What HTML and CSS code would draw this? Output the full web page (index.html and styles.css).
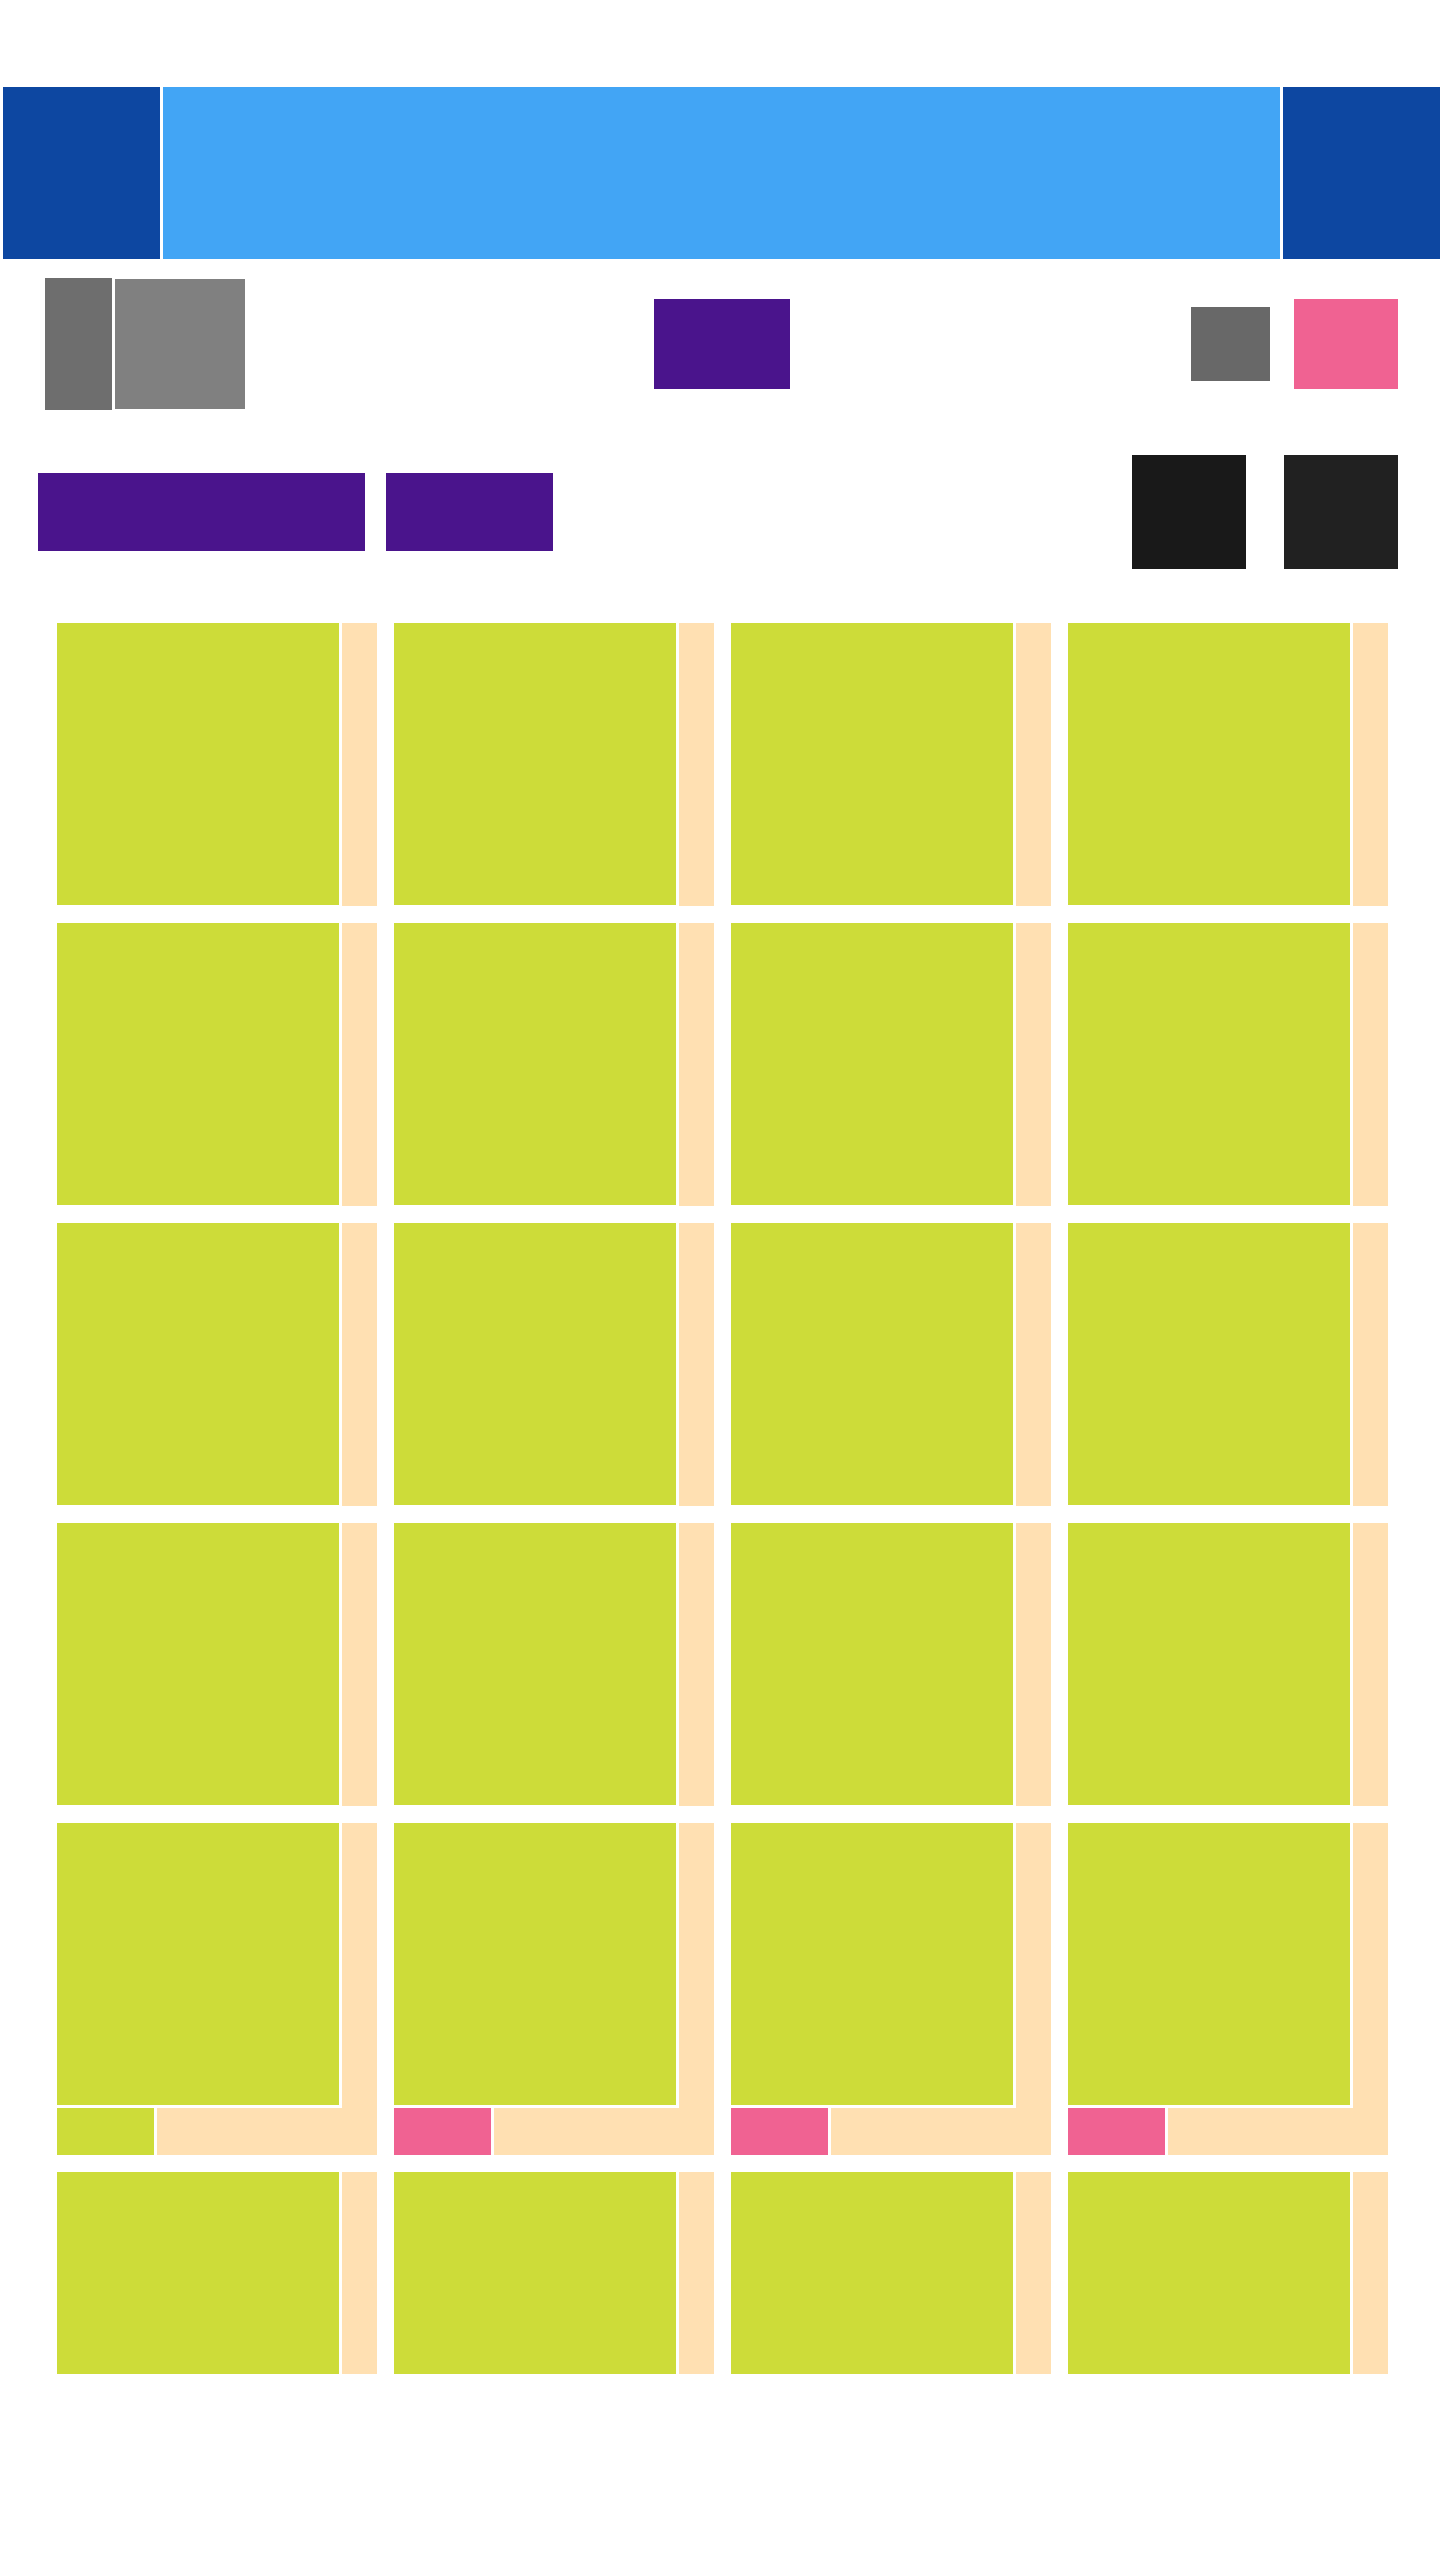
FILE: index.html
```html
<!DOCTYPE html>
<html lang="en">
<head>
<meta charset="utf-8">
<title>Gallery</title>
<link rel="stylesheet" href="styles.css">
</head>
<body>
<div class="page">
  <header class="header">
    <div class="header-side"></div>
    <div class="header-main"></div>
    <div class="header-side"></div>
  </header>

  <section class="toolbar">
    <div class="toolbar-left">
      <div class="logo-mark"></div>
      <div class="logo-box"></div>
    </div>
    <div class="toolbar-center">
      <div class="tab-active"></div>
    </div>
    <div class="toolbar-right">
      <div class="tool-gray"></div>
      <div class="tool-pink"></div>
    </div>
  </section>

  <section class="actions">
    <div class="actions-left">
      <div class="pill pill-wide"></div>
      <div class="pill pill-narrow"></div>
    </div>
    <div class="actions-right">
      <div class="square square-a"></div>
      <div class="square square-b"></div>
    </div>
  </section>

  <div class="grid-wrap">
    <div class="grid">
      <div class="card"><div class="thumb"></div></div>
      <div class="card"><div class="thumb"></div></div>
      <div class="card"><div class="thumb"></div></div>
      <div class="card"><div class="thumb"></div></div>

      <div class="card"><div class="thumb"></div></div>
      <div class="card"><div class="thumb"></div></div>
      <div class="card"><div class="thumb"></div></div>
      <div class="card"><div class="thumb"></div></div>

      <div class="card"><div class="thumb"></div></div>
      <div class="card"><div class="thumb"></div></div>
      <div class="card"><div class="thumb"></div></div>
      <div class="card"><div class="thumb"></div></div>

      <div class="card"><div class="thumb"></div></div>
      <div class="card"><div class="thumb"></div></div>
      <div class="card"><div class="thumb"></div></div>
      <div class="card"><div class="thumb"></div></div>

      <div class="card card-bar"><div class="thumb"></div><div class="bar"><div class="bar-tag tag-green"></div></div></div>
      <div class="card card-bar"><div class="thumb"></div><div class="bar"><div class="bar-tag tag-pink"></div></div></div>
      <div class="card card-bar"><div class="thumb"></div><div class="bar"><div class="bar-tag tag-pink"></div></div></div>
      <div class="card card-bar"><div class="thumb"></div><div class="bar"><div class="bar-tag tag-pink"></div></div></div>

      <div class="card"><div class="thumb"></div></div>
      <div class="card"><div class="thumb"></div></div>
      <div class="card"><div class="thumb"></div></div>
      <div class="card"><div class="thumb"></div></div>
    </div>
  </div>
</div>
</body>
</html>
```

FILE: styles.css
```css
* {
  box-sizing: content-box;
}

html, body {
  margin: 0;
  padding: 0;
  background: #ffffff;
  font-family: "Liberation Sans", Arial, sans-serif;
}

.page {
  padding: 87px 0 0 3px;
}

/* Header */
.header {
  display: flex;
  gap: 3px;
  height: 172px;
}

.header-side {
  width: 157px;
  flex: none;
  background: #0d47a1;
}

.header-main {
  flex: 1;
  background: #42a5f5;
}

/* Toolbar */
.toolbar {
  display: grid;
  grid-template-columns: 1fr auto 1fr;
  align-items: center;
  height: 132px;
  margin-top: 19px;
  padding: 0 42px;
}

.toolbar-left {
  display: flex;
  align-items: center;
  gap: 3px;
}

.logo-mark {
  width: 67px;
  height: 132px;
  background: #6e6e6e;
}

.logo-box {
  width: 130px;
  height: 130px;
  background: #808080;
}

.toolbar-center {
  display: flex;
  justify-content: center;
}

.tab-active {
  width: 136px;
  height: 90px;
  background: #4a148c;
}

.toolbar-right {
  display: flex;
  justify-content: flex-end;
  align-items: center;
  gap: 24px;
}

.tool-gray {
  width: 79px;
  height: 74px;
  background: #686868;
}

.tool-pink {
  width: 104px;
  height: 90px;
  background: #f06292;
}

/* Actions row */
.actions {
  display: flex;
  justify-content: space-between;
  align-items: center;
  height: 114px;
  margin-top: 45px;
  padding: 0 42px 0 35px;
}

.actions-left {
  display: flex;
  gap: 21px;
}

.pill {
  height: 78px;
  background: #4a148c;
}

.pill-wide {
  width: 327px;
}

.pill-narrow {
  width: 167px;
}

.actions-right {
  display: flex;
  gap: 38px;
}

.square {
  width: 114px;
  height: 114px;
}

.square-a {
  background: #191919;
}

.square-b {
  background: #212121;
}

/* Grid */
.grid-wrap {
  margin-top: 54px;
  height: 1751px;
  overflow: hidden;
  padding-left: 54px;
}

.grid {
  display: grid;
  grid-template-columns: repeat(4, 320px);
  gap: 17px;
  align-items: start;
}

.card {
  width: 320px;
  height: 283px;
  overflow: hidden;
  background: #ffe0b2;
}

.card-bar {
  height: 332px;
}

.thumb {
  width: 282px;
  height: 282px;
  background: #cddc39;
  border-right: 3px solid #ffffff;
  border-bottom: 3px solid #ffffff;
}

.bar {
  display: flex;
  height: 47px;
}

.bar-tag {
  width: 97px;
  height: 47px;
  border-right: 3px solid #ffffff;
}

.tag-green {
  background: #cddc39;
}

.tag-pink {
  background: #f06292;
}
```
